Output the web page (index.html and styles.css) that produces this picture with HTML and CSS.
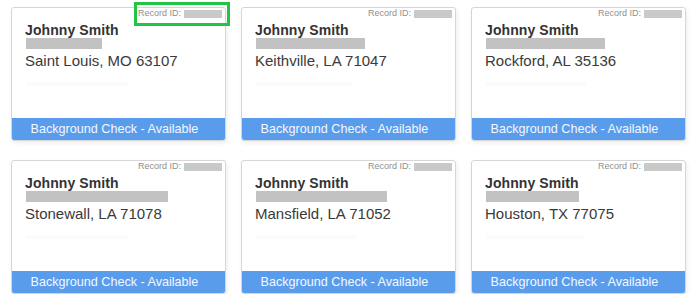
FILE: index.html
```html
<!DOCTYPE html>
<html>
<head>
<meta charset="utf-8">
<link rel="stylesheet" href="styles.css">
</head>
<body>
<div class="grid">
  <div class="card">
    <div class="rid">Record ID: <span class="rid-mask"></span></div>
    <div class="name">Johnny Smith</div>
    <div class="mask" style="width:76px"></div>
    <div class="addr">Saint Louis, MO 63107</div>
    <div class="faint" style="width:102px"></div>
    <div class="bar">Background Check - Available</div>
    <div class="highlight"></div>
  </div>
  <div class="card">
    <div class="rid">Record ID: <span class="rid-mask"></span></div>
    <div class="name">Johnny Smith</div>
    <div class="mask" style="width:109px"></div>
    <div class="addr">Keithville, LA 71047</div>
    <div class="faint" style="width:96px"></div>
    <div class="bar">Background Check - Available</div>
  </div>
  <div class="card">
    <div class="rid">Record ID: <span class="rid-mask"></span></div>
    <div class="name">Johnny Smith</div>
    <div class="mask" style="width:119px"></div>
    <div class="addr">Rockford, AL 35136</div>
    <div class="faint" style="width:100px"></div>
    <div class="bar">Background Check - Available</div>
  </div>
  <div class="card">
    <div class="rid">Record ID: <span class="rid-mask"></span></div>
    <div class="name">Johnny Smith</div>
    <div class="mask" style="width:142px"></div>
    <div class="addr">Stonewall, LA 71078</div>
    <div class="faint" style="width:102px"></div>
    <div class="bar">Background Check - Available</div>
  </div>
  <div class="card">
    <div class="rid">Record ID: <span class="rid-mask"></span></div>
    <div class="name">Johnny Smith</div>
    <div class="mask" style="width:131px"></div>
    <div class="addr">Mansfield, LA 71052</div>
    <div class="faint" style="width:100px"></div>
    <div class="bar">Background Check - Available</div>
  </div>
  <div class="card">
    <div class="rid">Record ID: <span class="rid-mask"></span></div>
    <div class="name">Johnny Smith</div>
    <div class="mask" style="width:93px"></div>
    <div class="addr">Houston, TX 77075</div>
    <div class="faint" style="width:98px"></div>
    <div class="bar">Background Check - Available</div>
  </div>
</div>
</body>
</html>
```
FILE: styles.css
```css
html, body {
  margin: 0;
  padding: 0;
  background: #fff;
}
body {
  font-family: "Liberation Sans", Arial, sans-serif;
  color: #333;
}
.grid {
  display: grid;
  grid-template-columns: repeat(3, 215px);
  grid-auto-rows: 134px;
  column-gap: 15px;
  row-gap: 19px;
  padding: 7px 0 0 11px;
}
.card {
  position: relative;
  display: flex;
  flex-direction: column;
  box-sizing: border-box;
  border: 1px solid #d6d6d6;
  border-radius: 3px;
  background: #fff;
  box-shadow: 1px 2px 4px rgba(0, 0, 0, 0.08);
}
.rid {
  display: flex;
  justify-content: flex-end;
  align-items: center;
  height: 11px;
  padding-right: 3px;
  font-size: 9px;
  line-height: 11px;
  color: #8f8f8f;
  gap: 3px;
}
.rid-mask {
  display: inline-block;
  width: 38px;
  height: 8px;
  background: #c9c9c9;
}
.name {
  margin: 3px 0 0 13px;
  font-size: 14px;
  line-height: 16px;
  font-weight: bold;
  color: #333;
  letter-spacing: 0.1px;
}
.mask {
  margin-left: 14px;
  height: 11px;
  background: #c2c2c2;
}
.addr {
  margin: 3px 0 0 13px;
  font-size: 15px;
  line-height: 18px;
  color: #3a3a3a;
}
.faint {
  margin: 12px 0 0 14px;
  height: 4px;
  background: #fbfbfb;
}
.bar {
  margin-top: auto;
  height: 22px;
  line-height: 22px;
  background: #5a9cec;
  color: #f4f8ff;
  font-size: 12.6px;
  text-align: center;
  padding-right: 8px;
  border-radius: 0 0 2px 2px;
}
.highlight {
  position: absolute;
  left: 122px;
  top: -6px;
  width: 96px;
  height: 24px;
  box-sizing: border-box;
  border: 3px solid #23c343;
}
```
